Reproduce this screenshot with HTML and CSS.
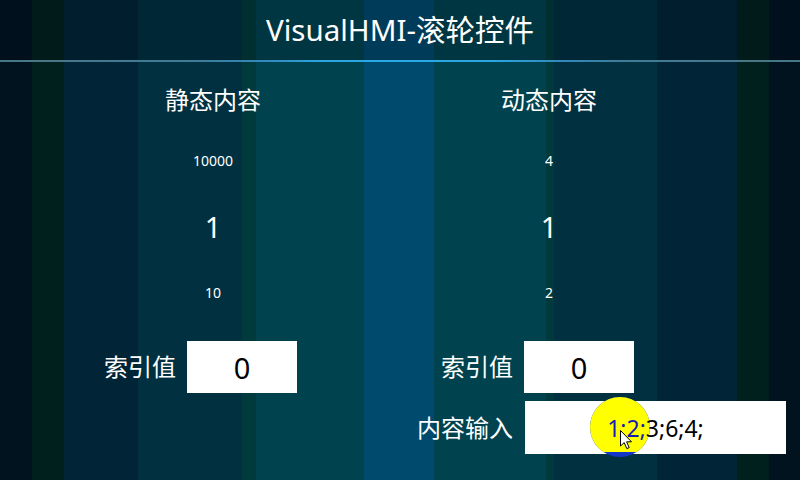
FILE: index.html
```html
<!DOCTYPE html>
<html lang="zh">
<head>
<meta charset="utf-8">
<title>VisualHMI-滚轮控件</title>
<link rel="stylesheet" href="styles.css">
</head>
<body>
<div class="screen">
  <header class="title">VisualHMI-滚轮控件</header>
  <div class="rule"></div>
  <main class="columns">
    <section class="col">
      <h2 class="heading">静态内容</h2>
      <div class="wheel">
        <span class="item side">10000</span>
        <span class="item current">1</span>
        <span class="item side">10</span>
      </div>
    </section>
    <section class="col">
      <h2 class="heading">动态内容</h2>
      <div class="wheel">
        <span class="item side">4</span>
        <span class="item current">1</span>
        <span class="item side">2</span>
      </div>
    </section>
  </main>
  <div class="inputs">
    <span class="label c1">索引值</span>
    <div class="box num c2">0</div>
    <span class="label c3">索引值</span>
    <div class="box num c4">0</div>
    <span class="label c3 r2">内容输入</span>
    <div class="box text c4 r2 wide">
      <span class="hilite"></span>
      <span class="content"><span class="sel">1;2;</span>3;6;4;</span>
      <svg class="cursor" width="13" height="20" viewBox="0 0 13 20"><path d="M0.5 0.5 L0.5 16 L4.2 12.6 L6.8 18.6 L9.2 17.6 L6.6 11.8 L11.5 11.8 Z" fill="#fff" stroke="#000" stroke-width="1" stroke-linejoin="round"/></svg>
    </div>
  </div>
</div>
</body>
</html>
```
FILE: styles.css
```css
html, body {
  margin: 0;
  padding: 0;
}
body {
  width: 800px;
  height: 480px;
  overflow: hidden;
  font-family: "Noto Sans", "Noto Sans CJK SC", sans-serif;
  color: #fff;
}
.screen {
  width: 800px;
  height: 480px;
  background: linear-gradient(90deg,
    #01131f 0px, #01131f 32px,
    #00201d 32px, #00201d 64px,
    #012536 64px, #012536 138px,
    #013041 138px, #013041 242px,
    #003a3c 242px, #003a3c 256px,
    #00434f 256px, #00434f 364px,
    #004a6e 364px, #004a6e 434px,
    #00434f 434px, #00434f 546px,
    #003a3c 546px, #003a3c 554px,
    #013041 554px, #013041 657px,
    #012536 657px, #012536 737px,
    #00201d 737px, #00201d 769px,
    #01131f 769px, #01131f 800px);
  display: flex;
  flex-direction: column;
}
.title {
  height: 60px;
  line-height: 60px;
  text-align: center;
  font-size: 29.5px;
  background: rgba(0, 8, 16, 0.22);
}
.rule {
  height: 2px;
  background: linear-gradient(90deg, #4a7684 0%, #3d7c98 25%, #3488bd 33%, #29a9e1 41%, #29a9e1 61%, #3488bd 70%, #3d7c98 78%, #4a7684 100%);
}
.columns {
  display: grid;
  grid-template-columns: 336px 336px;
  padding-left: 45px;
  margin-top: 22px;
}
.col {
  display: flex;
  flex-direction: column;
  align-items: center;
}
.heading {
  margin: 0;
  font-size: 24px;
  font-weight: normal;
  line-height: 32px;
}
.wheel {
  margin-top: 12px;
  display: flex;
  flex-direction: column;
  align-items: center;
}
.item {
  height: 66px;
  line-height: 66px;
}
.side {
  font-size: 14px;
}
.current {
  font-size: 29px;
}
.inputs {
  margin-top: 15px;
  display: grid;
  grid-template-columns: 187px 110px 227px 262px;
  grid-template-rows: 52px 53px;
  row-gap: 8px;
}
.label {
  font-size: 24px;
  text-align: right;
  padding-right: 11px;
  align-self: center;
  line-height: 32px;
}
.c1 { grid-column: 1; grid-row: 1; }
.c2 { grid-column: 2; grid-row: 1; }
.c3 { grid-column: 3; grid-row: 1; }
.c4 { grid-column: 4; grid-row: 1; width: 110px; }
.r2 { grid-row: 2; }
.box {
  background: #fff;
  color: #000;
  display: flex;
  align-items: center;
  justify-content: center;
}
.num {
  font-size: 29px;
}
.wide {
  width: 261px;
  margin-left: 1px;
}
.text {
  position: relative;
  font-size: 23px;
}
.hilite {
  position: absolute;
  left: 65px;
  top: -4px;
  width: 60px;
  height: 60px;
  border-radius: 50%;
  background: #1236c8;
}
.hilite::after {
  content: "";
  position: absolute;
  inset: 0;
  border-radius: 50%;
  background: #ffff00;
  clip-path: inset(0 0 5px 0);
}
.content {
  position: relative;
  color: #000;
}
.sel {
  color: #1a1ab4;
}
.cursor {
  position: absolute;
  left: 95px;
  top: 29px;
}
```
